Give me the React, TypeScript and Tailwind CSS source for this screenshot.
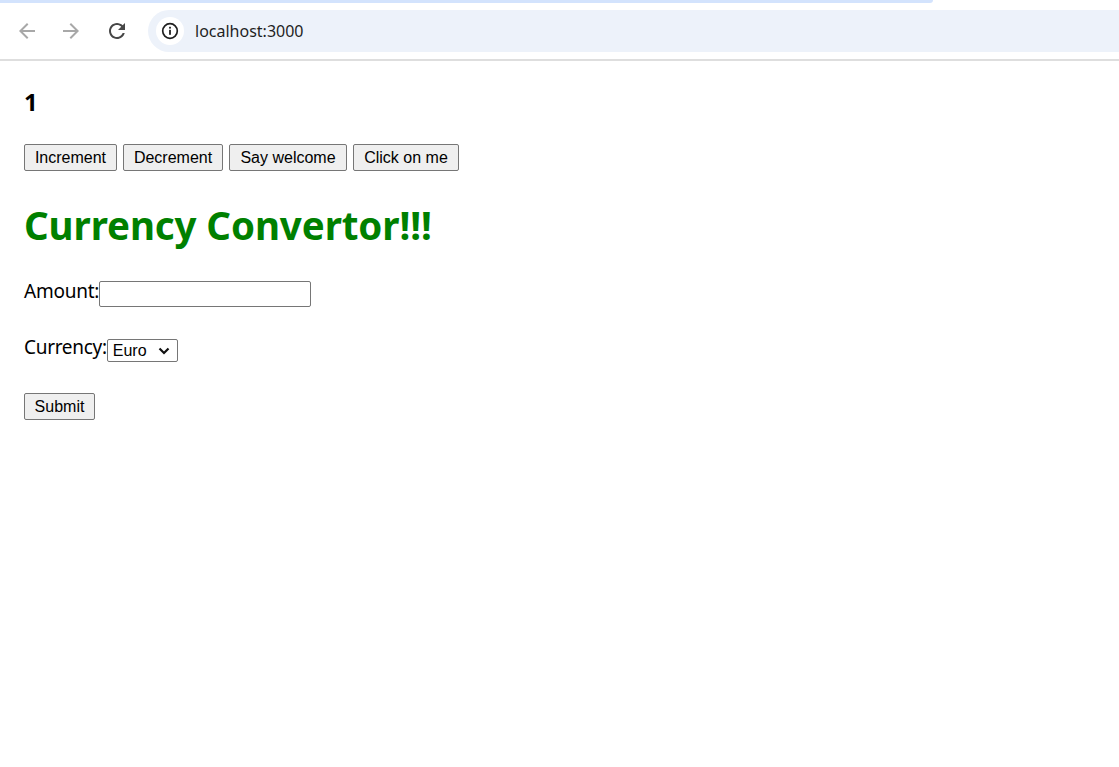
import React from "react";

const SEGOE = "font-['Noto_Sans','Open_Sans',sans-serif]";
const ARIAL = "font-['Liberation_Sans',Arial,sans-serif]";

function BackIcon({ className }: { className?: string }) {
  return (
    <svg viewBox="0 0 24 24" className={className} fill="currentColor">
      <path d="M20 11H7.83l5.59-5.59L12 4l-8 8 8 8 1.41-1.41L7.83 13H20v-2z" />
    </svg>
  );
}

function ForwardIcon({ className }: { className?: string }) {
  return (
    <svg viewBox="0 0 24 24" className={className} fill="currentColor">
      <path d="M4 11h12.17l-5.59-5.59L12 4l8 8-8 8-1.41-1.41L16.17 13H4v-2z" />
    </svg>
  );
}

function ReloadIcon({ className }: { className?: string }) {
  return (
    <svg viewBox="0 0 24 24" className={className} fill="currentColor">
      <path d="M17.65 6.35C16.2 4.9 14.21 4 12 4c-4.42 0-7.99 3.58-7.99 8s3.57 8 7.99 8c3.73 0 6.84-2.55 7.73-6h-2.08c-.82 2.330-3.04 4-5.65 4-3.31 0-6-2.69-6-6s2.690-6 6-6c1.66 0 3.14.69 4.22 1.78L13 11h7V4l-2.35 2.35z" />
    </svg>
  );
}

function InfoIcon({ className }: { className?: string }) {
  return (
    <svg viewBox="0 0 20 20" className={className} fill="none">
      <circle cx="10" cy="10" r="7.3" stroke="currentColor" strokeWidth="1.7" />
      <rect x="9.1" y="8.8" width="1.8" height="5" fill="currentColor" />
      <rect x="9.1" y="5.8" width="1.8" height="1.8" fill="currentColor" />
    </svg>
  );
}

function BrowserBar() {
  return (
    <div className="bg-white">
      <div className="h-[3px] w-[933px] rounded-br-[3px] bg-[#d3e3fd]" />
      <div className="flex h-[56px] items-center">
        <div className="flex items-center">
          <BackIcon className="ml-[15px] h-6 w-6 text-[#a8a8a8]" />
          <ForwardIcon className="ml-[20px] h-6 w-6 text-[#a8a8a8]" />
          <ReloadIcon className="ml-[22px] h-6 w-6 text-[#474747]" />
        </div>
        <div className="ml-[19px] flex h-[42px] flex-1 items-center rounded-l-full bg-[#edf2fa] pl-[8px]">
          <div className="flex h-7 w-7 items-center justify-center rounded-full bg-white">
            <InfoIcon className="h-5 w-5 text-[#1f1f1f]" />
          </div>
          <span className={`ml-[11px] text-[16px] text-[#1f1f1f] ${SEGOE}`}>localhost:3000</span>
        </div>
      </div>
      <div className="h-[2px] bg-[#dedede]" />
    </div>
  );
}

function NativeButton({ label, width }: { label: string; width: string }) {
  return (
    <button
      type="button"
      className={`flex h-[27px] items-center justify-center rounded-[2px] border border-[#767676] bg-[#efefef] text-[16px] leading-[18px] text-black ${width} ${ARIAL}`}
    >
      {label}
    </button>
  );
}

export default function App() {
  return (
    <div className="min-h-screen bg-white text-black">
      <BrowserBar />
      <div className="pl-[24px]">
        <h2 className={`mt-[25px] text-[24px] font-bold leading-[32px] ${SEGOE}`}>1</h2>

        <div className="mt-[26px] flex gap-[6px]">
          <NativeButton label="Increment" width="w-[93px]" />
          <NativeButton label="Decrement" width="w-[100px]" />
          <NativeButton label="Say welcome" width="w-[118px]" />
          <NativeButton label="Click on me" width="w-[106px]" />
        </div>

        <h1
          className={`mt-[30px] text-[38.5px] font-bold leading-[48px] tracking-[-0.1px] text-[#008000] ${SEGOE}`}
        >
          Currency Convertor!!!
        </h1>

        <div className="mt-[32px] flex items-start">
          <label className={`text-[19px] leading-[20px] tracking-[-0.25px] ${SEGOE}`}>Amount:</label>
          <input
            type="text"
            className="h-[26px] w-[212px] rounded-[2px] border border-[#767676] bg-white px-1 text-[16px] outline-none"
          />
        </div>

        <div className="mt-[30px] flex items-start">
          <label className={`text-[19px] leading-[20px] tracking-[-0.3px] ${SEGOE}`}>Currency:</label>
          <div className="mt-[2px] flex h-[23px] w-[71px] items-center rounded-[2px] border border-[#767676] bg-white">
            <span className={`ml-[5px] flex-1 text-[16px] leading-[18px] ${ARIAL}`}>Euro</span>
            <svg viewBox="0 0 12 8" className="mr-[7px] h-[8px] w-[12px]" fill="none">
              <path d="M1.5 1.5 6 6l4.5-4.5" stroke="#111" strokeWidth="2.2" />
            </svg>
          </div>
        </div>

        <div className="mt-[31px]">
          <NativeButton label="Submit" width="w-[71px]" />
        </div>
      </div>
    </div>
  );
}
